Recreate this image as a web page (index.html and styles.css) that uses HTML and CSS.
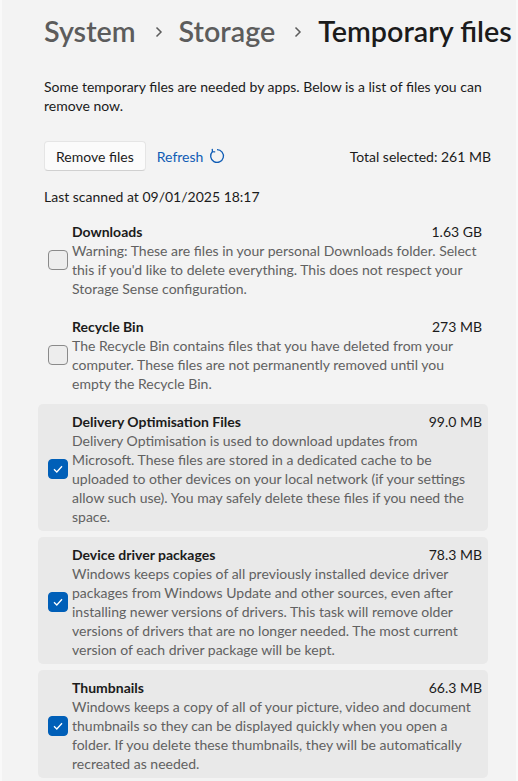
FILE: index.html
```html
<!DOCTYPE html>
<html lang="en">
<head>
    <meta charset="UTF-8">
    <meta name="viewport" content="width=device-width, initial-scale=1.0">
    <title>Temporary files</title>
    <link rel="stylesheet" href="styles.css">
</head>
<body>
    <div class="window">
        <h1 class="breadcrumb">
            <span class="crumb">System</span>
            <svg class="chevron" width="8" height="12" viewBox="0 0 8 12"><polyline points="1.5,1.5 6,6 1.5,10.5" /></svg>
            <span class="crumb">Storage</span>
            <svg class="chevron" width="8" height="12" viewBox="0 0 8 12"><polyline points="1.5,1.5 6,6 1.5,10.5" /></svg>
            <span class="current">Temporary files</span>
        </h1>

        <p class="intro">Some temporary files are needed by apps. Below is a list of files you can remove now.</p>

        <div class="actions">
            <button type="button" class="btn">Remove files</button>
            <a href="#" class="link">Refresh
                <svg class="refresh-icon" width="16" height="16" viewBox="0 0 16 16">
                    <path d="M8 1.6 A6.4 6.4 0 1 1 3.5 3.5" />
                    <polyline points="3.2,0.9 3.5,3.6 6.2,3.8" />
                </svg>
            </a>
            <span class="total">Total selected: 261 MB</span>
        </div>

        <p class="scanned">Last scanned at 09/01/2025 18:17</p>

        <ul class="file-list">
            <li class="file-item">
                <span class="checkbox"></span>
                <div class="file-info">
                    <div class="file-head">
                        <span class="file-name">Downloads</span>
                        <span class="file-size">1.63 GB</span>
                    </div>
                    <p class="file-desc">Warning: These are files in your personal Downloads folder. Select this if you'd like to delete everything. This does not respect your Storage Sense configuration.</p>
                </div>
            </li>
            <li class="file-item">
                <span class="checkbox"></span>
                <div class="file-info">
                    <div class="file-head">
                        <span class="file-name">Recycle Bin</span>
                        <span class="file-size">273 MB</span>
                    </div>
                    <p class="file-desc">The Recycle Bin contains files that you have deleted from your computer. These files are not permanently removed until you empty the Recycle Bin.</p>
                </div>
            </li>
            <li class="file-item selected">
                <span class="checkbox checked">
                    <svg width="12" height="12" viewBox="0 0 12 12"><polyline points="2,6.3 4.8,9 10,3.2" /></svg>
                </span>
                <div class="file-info">
                    <div class="file-head">
                        <span class="file-name">Delivery Optimisation Files</span>
                        <span class="file-size">99.0 MB</span>
                    </div>
                    <p class="file-desc">Delivery Optimisation is used to download updates from Microsoft. These files are stored in a dedicated cache to be uploaded to other devices on your local network (if your settings allow such use). You may safely delete these files if you need the space.</p>
                </div>
            </li>
            <li class="file-item selected">
                <span class="checkbox checked">
                    <svg width="12" height="12" viewBox="0 0 12 12"><polyline points="2,6.3 4.8,9 10,3.2" /></svg>
                </span>
                <div class="file-info">
                    <div class="file-head">
                        <span class="file-name">Device driver packages</span>
                        <span class="file-size">78.3 MB</span>
                    </div>
                    <p class="file-desc">Windows keeps copies of all previously installed device driver packages from Windows Update and other sources, even after installing newer versions of drivers. This task will remove older versions of drivers that are no longer needed. The most current version of each driver package will be kept.</p>
                </div>
            </li>
            <li class="file-item selected">
                <span class="checkbox checked">
                    <svg width="12" height="12" viewBox="0 0 12 12"><polyline points="2,6.3 4.8,9 10,3.2" /></svg>
                </span>
                <div class="file-info">
                    <div class="file-head">
                        <span class="file-name">Thumbnails</span>
                        <span class="file-size">66.3 MB</span>
                    </div>
                    <p class="file-desc">Windows keeps a copy of all of your picture, video and document thumbnails so they can be displayed quickly when you open a folder. If you delete these thumbnails, they will be automatically recreated as needed.</p>
                </div>
            </li>
        </ul>
    </div>
</body>
</html>
```

FILE: styles.css
```css
* {
    box-sizing: border-box;
    font-family: 'Segoe UI', Lato, 'Noto Sans', sans-serif;
}

html, body {
    margin: 0;
    height: 100%;
    overflow: hidden;
}

body {
    background-color: #f3f3f3;
    color: #1b1b1b;
    font-size: 14px;
}

.window {
    height: 100%;
    padding: 12px 25px 0 42px;
    border-left: 2px solid #f9f9f9;
    border-right: 2px solid #f9f9f9;
}

.breadcrumb {
    display: flex;
    align-items: center;
    margin: 0;
    font-size: 28.7px;
    font-weight: 600;
    line-height: 38px;
    white-space: nowrap;
}

.breadcrumb > * {
    flex-shrink: 0;
}

.crumb {
    color: #5c5c5c;
}

.current {
    color: #1b1b1b;
}

.chevron {
    margin: 2px 16px 0 19px;
    fill: none;
    stroke: #5c5c5c;
    stroke-width: 1.5;
}

.intro {
    margin: 27px 0 0;
    line-height: 19px;
}

.actions {
    display: flex;
    align-items: center;
    margin-top: 26px;
}

.btn {
    height: 30px;
    padding: 0 11px;
    background-color: #fbfbfb;
    border: 1px solid #e5e5e5;
    border-bottom-color: #d0d0d0;
    border-radius: 4px;
    color: #1b1b1b;
    font-size: 14px;
}

.link {
    display: flex;
    align-items: center;
    gap: 6px;
    margin-left: 11px;
    color: #0f5cb5;
    text-decoration: none;
}

.refresh-icon {
    fill: none;
    stroke: #0f5cb5;
    stroke-width: 1.3;
}

.total {
    margin-left: auto;
}

.scanned {
    margin: 16px 0 0;
    line-height: 19px;
}

.file-list {
    list-style: none;
    margin: 8px 3px 0 -6px;
    padding: 0;
}

.file-item {
    display: flex;
    align-items: center;
    gap: 4px;
    padding: 8px 6px 5px 10px;
    margin-bottom: 6px;
    border-radius: 5px;
}

.file-item.selected {
    background-color: #e9e9e9;
}

.checkbox {
    flex: 0 0 20px;
    display: flex;
    align-items: center;
    justify-content: center;
    width: 20px;
    height: 20px;
    border: 1px solid #8a8a8a;
    border-radius: 4px;
    background-color: #ededed;
}

.checkbox.checked {
    border-color: #005fb8;
    background-color: #005fb8;
}

.checkbox svg {
    fill: none;
    stroke: white;
    stroke-width: 1.3;
}

.file-info {
    flex: 1;
    line-height: 19px;
}

.file-head {
    display: flex;
    justify-content: space-between;
}

.file-name {
    font-weight: 700;
}

.file-desc {
    margin: 0;
    color: #616161;
}
```
